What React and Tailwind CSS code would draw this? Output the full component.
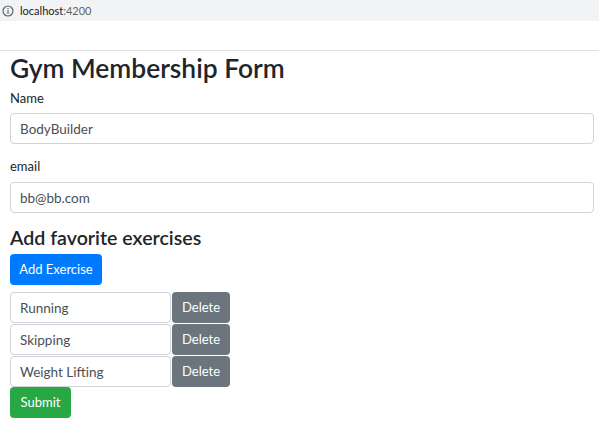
import React from 'react';

const exercises = ['Running', 'Skipping', 'Weight Lifting'];

const App = () => {
  return (
    <div className="font-['Lato',sans-serif] w-[599px] h-[424px] overflow-hidden bg-white text-[#212529]">
      {/* Browser address bar */}
      <div className="h-[21px] bg-[#f1f3f4] flex items-center pl-[2px] gap-[6px]">
        <svg width="12" height="12" viewBox="0 0 12 12" fill="none" stroke="#5f6368" strokeWidth="1.2">
          <circle cx="6" cy="6" r="5" />
          <path d="M6 5.2V9M6 3v1.2" />
        </svg>
        <span className="text-[11px] leading-none text-[#202124]">
          localhost<span className="text-[#5f6368]">:4200</span>
        </span>
      </div>
      <div className="h-[29px]" />
      <div className="h-[1px] bg-[#e0e0e0]" />

      <div className="pl-[10px] pr-[5px] pt-[1px]">
        <h1 className="text-[26.4px] leading-[33px] font-semibold">Gym Membership Form</h1>

        <label className="block text-[13px] leading-[20px] mt-[3px]">Name</label>
        <input
          defaultValue="BodyBuilder"
          className="block w-full h-[31px] mt-[5px] px-[9px] text-[13.5px] text-[#495057] bg-white border border-[#ced4da] rounded-[4px] outline-none"
        />

        <label className="block text-[13px] leading-[20px] mt-[12px]">email</label>
        <input
          defaultValue="bb@bb.com"
          className="block w-full h-[31px] mt-[6px] px-[9px] text-[13.5px] text-[#495057] bg-white border border-[#ced4da] rounded-[4px] outline-none"
        />

        <h4 className="text-[19.6px] leading-[24px] font-semibold mt-[13px]">Add favorite exercises</h4>

        <button className="block w-[92px] h-[31px] mt-[4px] pt-[1px] text-[13px] text-white bg-[#007bff] rounded-[4px]">
          Add Exercise
        </button>

        <div className="mt-[7px] flex flex-col">
          {exercises.map((name) => (
            <div key={name} className="flex h-[32px] pb-[1px] gap-[1px] last:h-[31px] last:pb-0">
              <input
                defaultValue={name}
                className="w-[161px] h-[31px] px-[9px] text-[13.5px] text-[#495057] bg-white border border-[#ced4da] rounded-[4px] outline-none"
              />
              <button className="w-[58px] h-[31px] pt-[1px] text-[13px] text-white bg-[#6c757d] rounded-[4px]">
                Delete
              </button>
            </div>
          ))}
        </div>

        <button className="block w-[61px] h-[31px] pt-[1px] text-[13px] text-white bg-[#28a745] rounded-[4px]">
          Submit
        </button>
      </div>
    </div>
  );
};

export default App;
